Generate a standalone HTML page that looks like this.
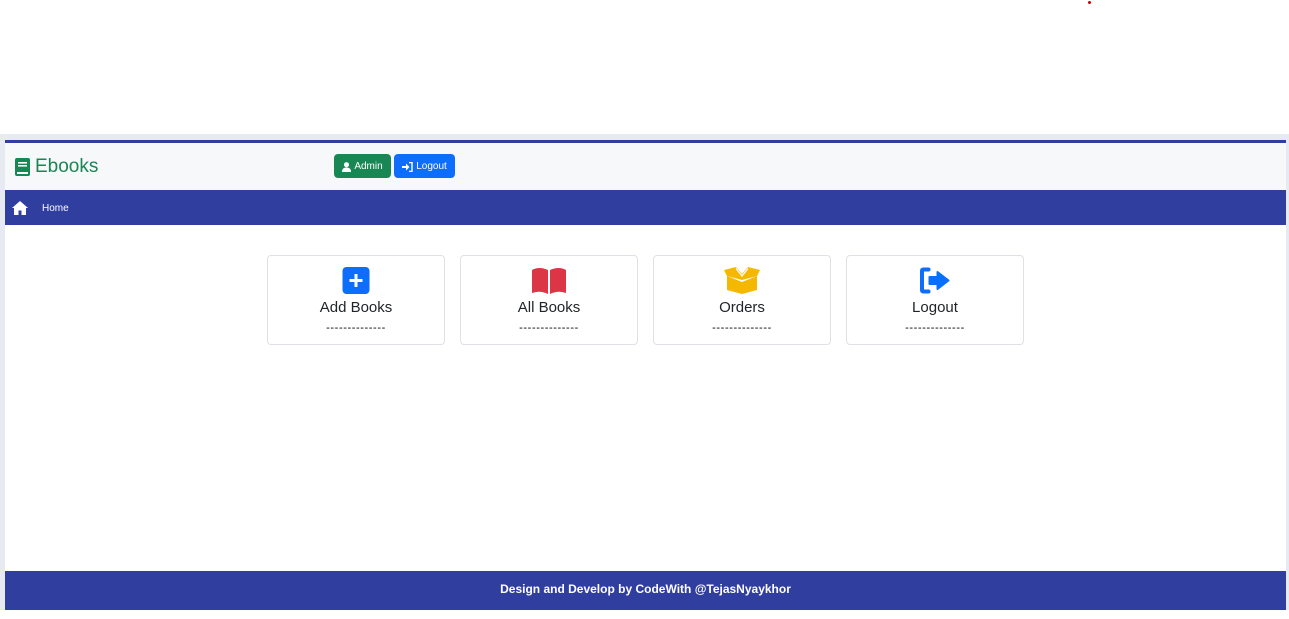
<!DOCTYPE html>
<html><head><meta charset="utf-8"><style>
*{margin:0;padding:0;box-sizing:border-box}
body{width:1289px;height:619px;background:#fff;font-family:"Liberation Sans",sans-serif;position:relative;overflow:hidden}
.frame{position:absolute;left:0;top:134px;width:1289px;height:485px;background:#e8eaf2}
.page{position:absolute;left:5px;top:140px;width:1281px;height:479px;background:#fff}
.topline{height:3px;background:#303f9f}
.hdr{height:47px;background:#f7f8fa;position:relative}
.logo{position:absolute;left:10px;top:13px;color:#198754;font-size:19px;display:flex;align-items:center;gap:5px}
.btn{position:absolute;top:11px;height:24px;border-radius:4px;color:#fff;font-size:10px;display:flex;align-items:center;justify-content:center;gap:3px;padding-top:1px}
.nav{height:35px;background:#303f9f;position:relative;color:#fff;font-size:10px}
.card{position:absolute;top:115px;width:178px;height:90px;border:1px solid #dee2e6;border-radius:4px;text-align:center}
.card svg{position:absolute;left:50%;transform:translateX(-50%);top:11px}
.card .t{position:absolute;top:43px;width:100%;font-size:15px;color:#212529}
.card .d{position:absolute;top:66px;width:100%;font-size:11px;color:#000;letter-spacing:0.6px}
.foot{position:absolute;left:0;top:431px;width:1281px;height:39px;background:#303f9f;color:#fff;font-size:12px;font-weight:bold;text-align:center;line-height:37px}
</style></head><body>
<div class="frame"></div>
<div class="page">
<div class="topline"></div>
<div class="hdr">
 <div class="logo"><svg width="15" height="18" viewBox="0 0 15 18"><rect x="0" y="0" width="15" height="18" rx="2" fill="#198754"/><rect x="3" y="4" width="9" height="1.6" fill="#fff"/><rect x="3" y="7" width="9" height="1.6" fill="#fff"/><rect x="2" y="14" width="11" height="2" fill="#fff"/></svg>Ebooks</div>
 <div class="btn" style="left:329px;width:57px;background:#198754"><svg width="9" height="10" viewBox="0 0 9 10"><circle cx="4.5" cy="2.7" r="2.5" fill="#fff"/><path d="M0 10C0 6.5 2 5.5 4.5 5.5S9 6.5 9 10Z" fill="#fff"/></svg>Admin</div>
 <div class="btn" style="left:389px;width:61px;background:#0d6efd"><svg width="11" height="10" viewBox="0 0 11 10"><path d="M0 4h4V1.5L7.5 5 4 8.5V6H0Z" fill="#fff"/><path d="M7 0.5h3v9H7" stroke="#fff" stroke-width="1.4" fill="none"/></svg>Logout</div>
</div>
<div class="nav">
 <svg style="position:absolute;left:7px;top:11px" width="16" height="14" viewBox="0 0 16 14"><path d="M8 0L0 7h2v7h4.5V9.5h3V14H14V7h2Z" fill="#fff"/></svg>
 <span style="position:absolute;left:37px;top:13px">Home</span>
</div>
<div class="card" style="left:262px"><svg width="27" height="27" viewBox="0 0 27 27"><rect width="27" height="27" rx="4" fill="#0d6efd"/><path d="M13.5 7v13M7 13.5h13" stroke="#fff" stroke-width="3"/></svg><div class="t">Add Books</div><div class="d">--------------</div></div>
<div class="card" style="left:455px"><svg width="36" height="27" viewBox="0 0 36 27"><path d="M1 3Q8 -1 17 3V27Q9 23 1 26Z" fill="#dc3545"/><path d="M35 3Q28 -1 19 3V27Q27 23 35 26Z" fill="#dc3545"/></svg><div class="t">All Books</div><div class="d">--------------</div></div>
<div class="card" style="left:648px"><svg width="36" height="27" viewBox="0 0 36 27"><path d="M3 9L18 15L33 9V23L18 27L3 23Z" fill="#f5b800"/><path d="M0 3L12 0L18 7L24 0L36 3L33 9L18 13L3 9Z" fill="#f5b800"/><path d="M12 1.5L18 9L24 1.5" stroke="#fff" stroke-width="1.2" fill="none"/></svg><div class="t">Orders</div><div class="d">--------------</div></div>
<div class="card" style="left:841px"><svg width="31" height="27" viewBox="0 0 31 27"><path d="M9 2.5H4Q2.5 2.5 2.5 4V23Q2.5 24.5 4 24.5H9" stroke="#0d6efd" stroke-width="4" fill="none" stroke-linecap="round"/><path d="M10 10H18V5L29 13.5L18 22V17H10Z" fill="#0d6efd" stroke="#0d6efd" stroke-width="2" stroke-linejoin="round"/></svg><div class="t">Logout</div><div class="d">--------------</div></div>
<div class="foot">Design and Develop by CodeWith @TejasNyaykhor</div>
</div>
<div style="position:absolute;left:0;top:610px;width:1289px;height:9px;background:#fff"></div>
<div style="position:absolute;left:1088px;top:1px;width:3px;height:3px;background:#c00;border-radius:50%"></div>
</body></html>
